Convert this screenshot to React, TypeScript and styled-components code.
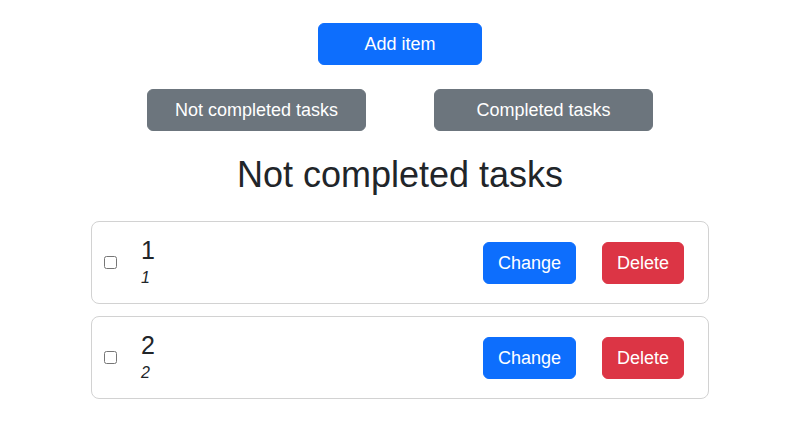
import React from "react";
import styled, { createGlobalStyle } from "styled-components";

const GlobalStyle = createGlobalStyle`
  html, body {
    margin: 0;
    padding: 0;
    background: #ffffff;
  }
  body {
    font-family: "Liberation Sans", Arial, sans-serif;
    color: #212529;
  }
  * { box-sizing: border-box; }
`;

const Page = styled.main`
  display: flex;
  flex-direction: column;
  align-items: center;
  padding: 23px 0 0 5px;
`;

const Button = styled.button<{ $variant: "primary" | "secondary" | "danger"; $width?: number }>`
  font-family: "Liberation Sans", Arial, sans-serif;
  font-size: 18px;
  line-height: 24px;
  padding: 8px 14px;
  border: 1px solid transparent;
  border-radius: 6px;
  color: #ffffff;
  cursor: pointer;
  width: ${(p) => (p.$width ? `${p.$width}px` : "auto")};
  background: ${(p) =>
    p.$variant === "primary" ? "#0d6efd" : p.$variant === "danger" ? "#dc3545" : "#6c757d"};
  border-color: ${(p) =>
    p.$variant === "primary" ? "#0d6efd" : p.$variant === "danger" ? "#dc3545" : "#6c757d"};
`;

const FilterRow = styled.div`
  display: flex;
  gap: 68px;
  margin-top: 24px;
`;

const Heading = styled.h2`
  font-size: 36px;
  font-weight: 400;
  line-height: 1.2;
  margin: 22px 0 25px;
`;

const List = styled.div`
  display: flex;
  flex-direction: column;
  gap: 12px;
  width: 618px;
`;

const Card = styled.div`
  display: flex;
  align-items: center;
  height: 83px;
  padding: 0 24px 0 12px;
  border: 1px solid #d2d2d2;
  border-radius: 8px;
`;

const Check = styled.input`
  width: 13px;
  height: 13px;
  margin: 0 24px 0 0;
`;

const TextBlock = styled.div`
  display: flex;
  flex-direction: column;
  gap: 1px;
`;

const Title = styled.div`
  font-size: 25px;
  line-height: 29px;
`;

const Subtitle = styled.div`
  font-size: 16px;
  line-height: 24px;
  font-style: italic;
`;

const Actions = styled.div`
  display: flex;
  gap: 26px;
  margin-left: auto;
`;

const tasks = [
  { id: 1, title: "1", description: "1" },
  { id: 2, title: "2", description: "2" },
];

export default function App() {
  return (
    <>
      <GlobalStyle />
      <Page>
        <Button $variant="primary" $width={164}>Add item</Button>
        <FilterRow>
          <Button $variant="secondary" $width={219}>Not completed tasks</Button>
          <Button $variant="secondary" $width={219}>Completed tasks</Button>
        </FilterRow>
        <Heading>Not completed tasks</Heading>
        <List>
          {tasks.map((t) => (
            <Card key={t.id}>
              <Check type="checkbox" />
              <TextBlock>
                <Title>{t.title}</Title>
                <Subtitle>{t.description}</Subtitle>
              </TextBlock>
              <Actions>
                <Button $variant="primary">Change</Button>
                <Button $variant="danger">Delete</Button>
              </Actions>
            </Card>
          ))}
        </List>
      </Page>
    </>
  );
}
